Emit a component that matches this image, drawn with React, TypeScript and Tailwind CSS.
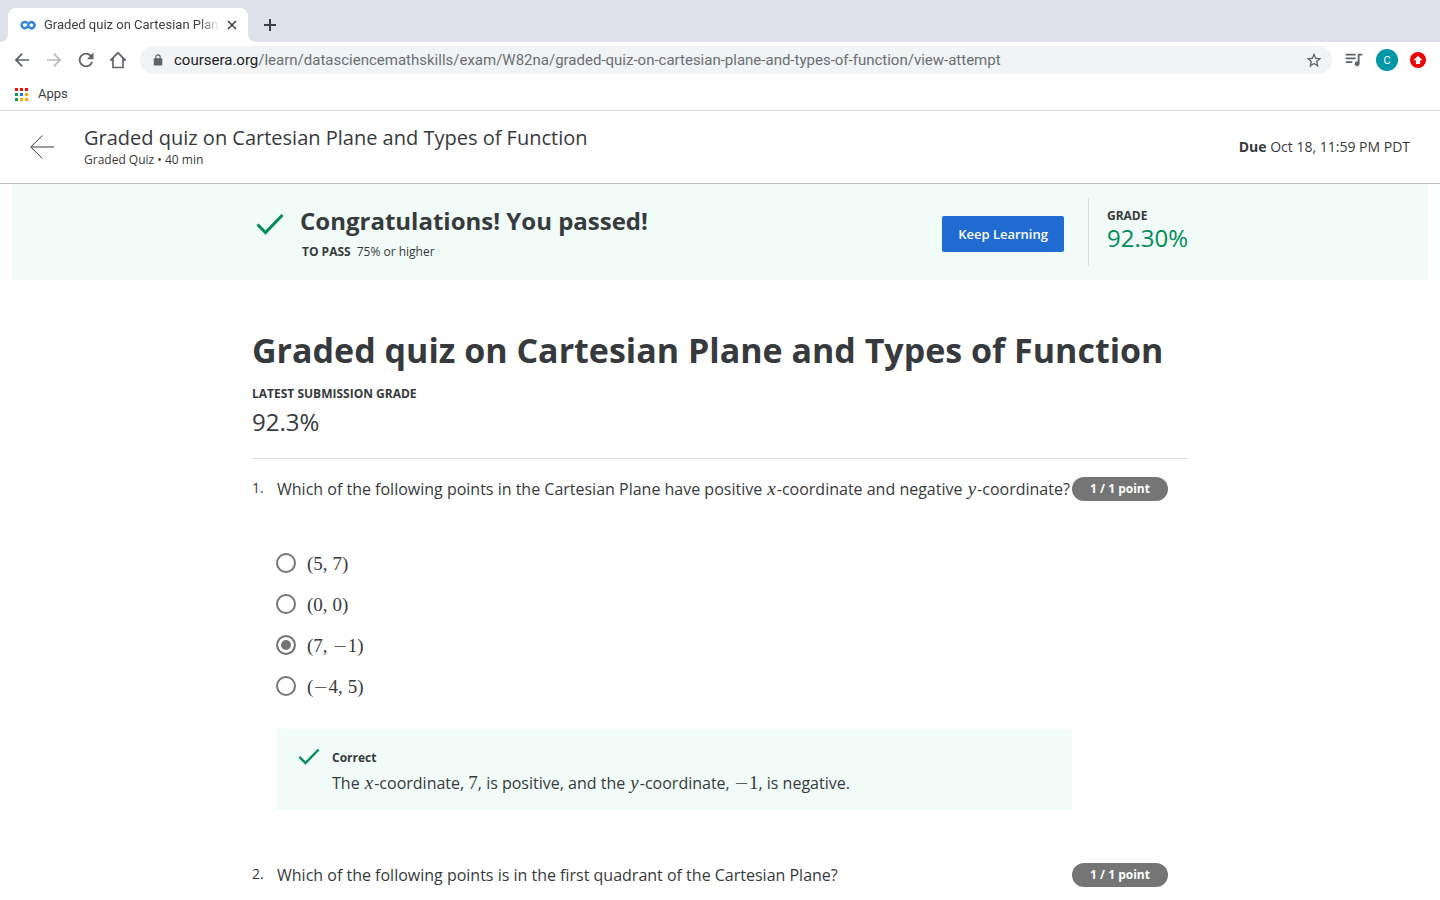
import type { ReactNode } from "react";

function Var({ children }: { children: ReactNode }) {
  return (
    <i className="px-px font-['Liberation_Serif',serif] text-[19px] leading-none">{children}</i>
  );
}

function Num({ children }: { children: ReactNode }) {
  return (
    <span className="font-['Liberation_Serif',serif] text-[19px] leading-none">{children}</span>
  );
}

function Minus() {
  return <span className="font-['DejaVu_Sans',sans-serif] text-[18px] font-extralight leading-none">−</span>;
}

function Check({ className }: { className: string }) {
  return (
    <svg viewBox="0 0 28 22" className={className} fill="none" stroke="#008c57" strokeWidth="3" aria-hidden="true">
      <path d="M1.5 11.5 9.5 19.5 26.5 2" />
    </svg>
  );
}

function Tab() {
  return (
    <div className="flex h-[42px] items-end bg-[#dee1e9] pl-2">
      <div className="relative flex h-[34px] w-60 items-center rounded-t-lg bg-white pl-3 pr-2">
        <svg viewBox="0 0 8 8" className="absolute bottom-0 -left-2 size-2" aria-hidden="true">
          <path d="M0 8h8V0a8 8 0 0 1-8 8Z" fill="#fff" />
        </svg>
        <svg viewBox="0 0 8 8" className="absolute bottom-0 -right-2 size-2" aria-hidden="true">
          <path d="M8 8H0V0a8 8 0 0 0 8 8Z" fill="#fff" />
        </svg>
        <svg viewBox="0 0 16 16" className="size-4 shrink-0" fill="none" stroke="#3385d6" strokeWidth="2.5" aria-hidden="true">
          <path d="M7.3 6.3A3.100 3.100 0 1 0 7 10.200C8.200 9.200 8.200 7.100 9.400 6a3 3 0 1 1 .2 4.500L8.500 9.500" />
        </svg>
        <span className="ml-2 w-[176px] overflow-hidden whitespace-nowrap text-[13px] leading-4 text-[#3c4043] [mask-image:linear-gradient(to_right,#000_88%,transparent)]">
          Graded quiz on Cartesian Plane
        </span>
        <button type="button" aria-label="Close tab" className="ml-1 flex size-4 items-center justify-center">
          <svg viewBox="0 0 10 10" className="size-[10px]" stroke="#3c4043" strokeWidth="1.6" aria-hidden="true">
            <path d="m1 1 8 8M9 1 1 9" />
          </svg>
        </button>
      </div>
      <button type="button" aria-label="New tab" className="ml-3 flex h-[34px] w-5 items-center justify-center">
        <svg viewBox="0 0 12 12" className="size-3" stroke="#3c4043" strokeWidth="2" aria-hidden="true">
          <path d="M6 0v12M0 6h12" />
        </svg>
      </button>
    </div>
  );
}

function NavButton({ label, d, color }: { label: string; d: string; color: string }) {
  return (
    <button type="button" aria-label={label} className="flex size-5 items-center justify-center">
      <svg viewBox="0 0 24 24" className="size-5" fill={color} aria-hidden="true">
        <path d={d} />
      </svg>
    </button>
  );
}

function Toolbar() {
  return (
    <div className="flex h-9 items-center pl-3 pr-[14px]">
      <div className="flex items-center gap-3">
        <NavButton label="Back" color="#5f6368" d="M20.5 11H7.2l5.8-5.8L11.6 3.7 3.2 12l8.4 8.3 1.4-1.5L7.2 13h13.3z" />
        <NavButton label="Forward" color="#b8babd" d="M3.5 11h13.3L11 5.200l1.400-1.500L20.800 12l-8.400 8.300-1.400-1.500 5.800-5.800H3.500z" />
        <NavButton label="Reload" color="#5f6368" d="M18.200 5.800A8.700 8.700 0 1 0 20.500 14h-2.300a6.500 6.500 0 1 1-1.600-6.600L13.200 11H21V3z" />
        <NavButton label="Home" color="#5f6368" d="M12 1.800 2.200 11.800V13H5v9h14v-9h2.800v-1.200zm0 3 5 5.200V20H7V10z" />
      </div>
      <div className="ml-3 flex h-7 flex-1 items-center rounded-full bg-[#f1f3f4] pl-3 pr-2">
        <svg viewBox="0 0 12 14" className="size-3" aria-hidden="true">
          <rect x="1" y="5" width="10" height="8.500" rx="1" fill="#5f6368" />
          <path d="M3.500 6V3.500a2.500 2.500 0 0 1 5 0V6" fill="none" stroke="#5f6368" strokeWidth="1.400" />
        </svg>
        <div className="ml-[10px] flex-1 whitespace-nowrap text-[15px] leading-5 text-[#6b6f74]">
          <span className="text-[#202124]">coursera.org</span>
          /learn/datasciencemathskills/exam/W82na/graded-quiz-on-cartesian-plane-and-types-of-function/view-attempt
        </div>
        <NavButton label="Bookmark this page" color="#5f6368" d="m21 9.900-6.500-.600L12 3.300 9.500 9.300 3 9.900l4.900 4.300-1.500 6.400 5.600-3.400 5.600 3.400-1.500-6.400zm-9 5.500-3.300 2 .9-3.800-2.900-2.500 3.800-.400L12 7.200l1.500 3.500 3.800.400-2.900 2.500.9 3.800z" />
      </div>
      <div className="ml-3 flex items-center gap-3">
        <NavButton label="Media controls" color="#5f6368" d="M2 4.500h12v2H2zM2 9h12v2H2zm0 4.500h8v2H2zM16.500 4.500H22v2h-3.300v10a2.900 2.900 0 1 1-2.200-2.800z" />
        <button type="button" aria-label="Profile" className="flex size-[22px] items-center justify-center rounded-full bg-[#0097a7] text-[11px] leading-none text-white">
          C
        </button>
        <button type="button" aria-label="Update browser" className="flex size-4 items-center justify-center rounded-full bg-[#ee0000]">
          <svg viewBox="0 0 8 8" className="size-[10px]" fill="#fff" aria-hidden="true">
            <path d="M4 .500 7.700 4.200H5.700v3H2.300v-3H.300z" />
          </svg>
        </button>
      </div>
    </div>
  );
}

const appDots = ["#ea1100", "#ea1100", "#ea1100", "#0fa04f", "#1a73ff", "#fbab00", "#0fa04f", "#fbab00", "#fbab00"];

function Bookmarks() {
  return (
    <div className="flex h-[33px] items-center border-b border-[#dadce0] pl-[15px]">
      <a href="#apps" className="flex items-center gap-[10px] text-[13px] leading-4 text-[#3c4043]">
        <svg viewBox="0 0 13 13" className="size-[13px]" aria-hidden="true">
          {appDots.map((fill, i) => (
            <rect key={i} x={(i % 3) * 5} y={Math.floor(i / 3) * 5} width="3" height="3" fill={fill} />
          ))}
        </svg>
        Apps
      </a>
    </div>
  );
}

function Pill() {
  return (
    <span className="flex h-6 w-24 shrink-0 items-center justify-center rounded-full bg-[#757575] text-[12px] font-bold leading-4 text-white">
      1 / 1 point
    </span>
  );
}

function Signed({ value }: { value: number }) {
  return (
    <>
      {value < 0 && <Minus />}
      {Math.abs(value)}
    </>
  );
}

function Pair({ a, b }: { a: number; b: number }) {
  return (
    <span className="flex h-6 gap-[5px] pt-[2px] font-['Liberation_Serif',serif] text-[19px] leading-[22px]">
      <span>
        (<Signed value={a} />,
      </span>
      <span>
        <Signed value={b} />)
      </span>
    </span>
  );
}

const options = [
  { a: 5, b: 7 },
  { a: 0, b: 0 },
  { a: 7, b: -1 },
  { a: -4, b: 5 },
];

export default function App() {
  return (
    <div className="min-h-screen bg-white font-['Open_Sans',sans-serif] text-[#373a3c]">
      <div className="font-[Roboto,sans-serif]">
        <Tab />
        <Toolbar />
        <Bookmarks />
      </div>

      <header className="flex h-[73px] items-center border-b border-[#bdbdbd] px-[30px]">
        <button type="button" aria-label="Back to course" className="flex size-6 items-center justify-center">
          <svg viewBox="0 0 24 24" className="size-6" fill="none" stroke="#373a3c" aria-hidden="true">
            <path d="M24 12H.8M12.300.500.8 12l11.500 11.500" />
          </svg>
        </button>
        <div className="ml-[30px] flex-1 pb-px">
          <p className="mb-px text-[20px] leading-[26px]">Graded quiz on Cartesian Plane and Types of Function</p>
          <p className="text-[12px] leading-4">Graded Quiz • 40 min</p>
        </div>
        <p className="text-[14px] leading-5">
          <b>Due</b> Oct 18, 11:59 PM PDT
        </p>
      </header>

      <section className="mx-3 h-24 bg-[#f1fbf8]">
        <div className="mx-auto flex h-full max-w-[936px] items-center">
          <div className="flex flex-1 gap-4 pl-1 pt-[3px]">
            <Check className="mt-2 h-[22px] w-7" />
            <div>
              <h2 className="text-[24px] font-bold leading-8">Congratulations! You passed!</h2>
              <p className="mt-[5px] flex gap-[6px] pl-[2px] text-[12px] leading-5">
                <b>TO PASS</b>
                <span>75% or higher</span>
              </p>
            </div>
          </div>
          <button type="button" className="mt-1 h-9 rounded-[2px] bg-[#1f6bd1] px-4 text-[13px] font-semibold leading-5 text-white">
            Keep Learning
          </button>
          <div className="ml-6 flex h-[68px] flex-col justify-center border-l border-[#dadfdd] pb-[5px] pl-[18px]">
            <span className="text-[12px] font-bold leading-4">GRADE</span>
            <span className="text-[24px] leading-7 text-[#008c57]">92.30%</span>
          </div>
        </div>
      </section>

      <main className="mx-auto max-w-[936px]">
        <h1 className="pt-[46px] text-[34px] font-bold leading-[48px]">
          Graded quiz on Cartesian Plane and Types of Function
        </h1>
        <p className="mt-3 text-[12px] font-bold leading-4">LATEST SUBMISSION GRADE</p>
        <p className="mt-1 text-[24px] leading-8">92.3%</p>
        <hr className="mt-5 border-[#e1e1e1]" />

        <section className="flex pt-[18px] pr-5">
          <span className="w-[25px] shrink-0 text-[14px] leading-[22px]">1.</span>
          <fieldset className="min-w-0 flex-1">
            <legend className="whitespace-nowrap text-[16px] leading-6">
              Which of the following points in the Cartesian Plane have positive <Var>x</Var>-coordinate and negative{" "}
              <Var>y</Var>-coordinate?
            </legend>
            <div className="mt-[50px] flex flex-col gap-[17px]">
              {options.map((o) => (
                <label key={`${o.a},${o.b}`} className="flex items-center gap-[11px]">
                  <input
                    type="radio"
                    name="q1"
                    defaultChecked={o.a === 7}
                    className="-ml-px size-5 appearance-none rounded-full border-2 border-[#757575] bg-white checked:bg-[#757575] checked:shadow-[inset_0_0_0_3px_#fff]"
                  />
                  <Pair a={o.a} b={o.b} />
                </label>
              ))}
            </div>
            <div className="mt-[31px] flex h-[81px] gap-3 bg-[#f1fbf8] pl-[21px] pt-[18px]">
              <Check className="mt-px h-[17px] w-[22px]" />
              <div>
                <p className="text-[12px] font-bold leading-[22px]">Correct</p>
                <p className="mt-[2px] text-[16px] leading-6">
                  The <Var>x</Var>-coordinate, <Num>7</Num>, is positive, and the <Var>y</Var>-coordinate,{" "}
                  <Num>
                    <Minus />1
                  </Num>
                  , is negative.
                </p>
              </div>
            </div>
          </fieldset>
          <Pill />
        </section>

        <section className="flex pt-[53px] pr-5">
          <span className="w-[25px] shrink-0 text-[14px] leading-[22px]">2.</span>
          <p className="flex-1 text-[16px] leading-6">
            Which of the following points is in the first quadrant of the Cartesian Plane?
          </p>
          <Pill />
        </section>
      </main>
    </div>
  );
}
